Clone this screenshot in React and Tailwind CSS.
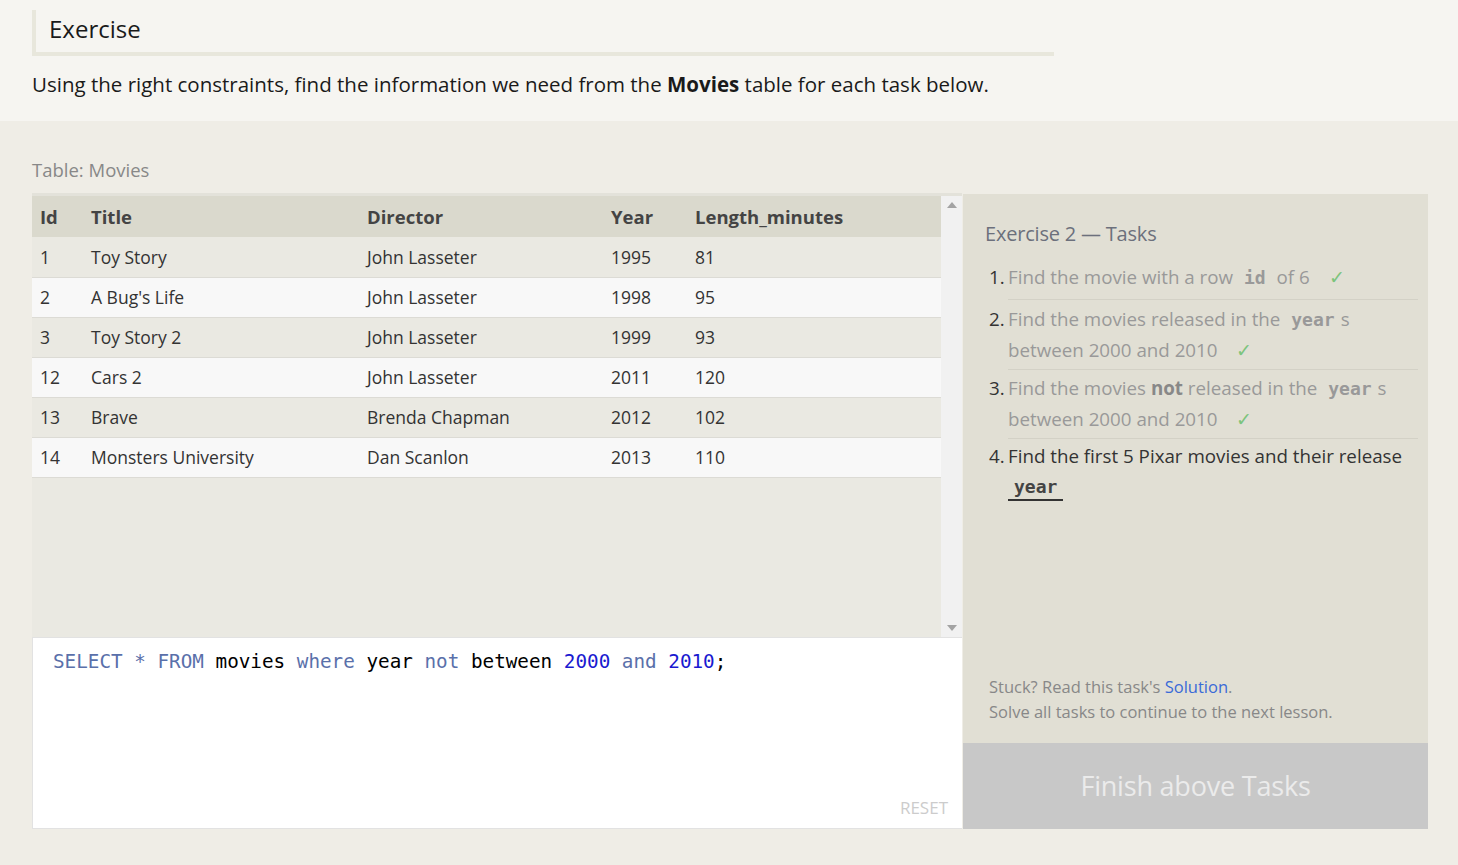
import React from "react";

const rows = [
  ["1", "Toy Story", "John Lasseter", "1995", "81"],
  ["2", "A Bug's Life", "John Lasseter", "1998", "95"],
  ["3", "Toy Story 2", "John Lasseter", "1999", "93"],
  ["12", "Cars 2", "John Lasseter", "2011", "120"],
  ["13", "Brave", "Brenda Chapman", "2012", "102"],
  ["14", "Monsters University", "Dan Scanlon", "2013", "110"],
];

function Check() {
  return <span className="ml-[14px] text-[#7cc47c]">✓</span>;
}

function Code({ children, dark }) {
  return (
    <code
      className={`px-[6px] font-['DejaVu_Sans_Mono',monospace] font-bold text-[18px] ${
        dark ? "text-[#444]" : "text-[#999]"
      }`}
    >
      {children}
    </code>
  );
}

export default function App() {
  return (
    <div className="min-h-[865px] bg-[#efede6] font-['Open_Sans',sans-serif] text-[#222]">
      {/* top section */}
      <div className="bg-[#f6f5f1] px-8 pt-[10px] h-[121px]">
        <div className="w-[1022px] h-[46px] border-l-4 border-b-4 border-[#e8e7dc] pl-[13px] flex items-center">
          <h2 className="text-[24px] leading-none text-[#1a1a1a] pb-[4px]">Exercise</h2>
        </div>
        <p className="mt-[14px] text-[20.5px] leading-[28px] text-[#1a1a1a]">
          Using the right constraints, find the information we need from the <b>Movies</b> table for each task below.
        </p>
      </div>

      {/* lower section */}
      <div className="px-8 pt-[37px]">
        <div className="text-[18.5px] leading-[24px] text-[#888]">Table: Movies</div>
        <div className="mt-[11px] flex w-[1396px] h-[636px]">
          {/* left column */}
          <div className="w-[930px] flex flex-col">
            <div className="h-[444px] flex border-t-[3px] border-[#e3e2da] bg-[#eae9e2]">
              <div className="flex-1">
                <table className="w-full border-collapse text-[17.5px]">
                  <thead>
                    <tr className="bg-[#dad9cd] h-[41px] text-[#444] text-[18.5px]">
                      <th className="w-[51px] text-left pl-[8px] font-bold">Id</th>
                      <th className="w-[276px] text-left pl-[8px] font-bold">Title</th>
                      <th className="w-[244px] text-left pl-[8px] font-bold">Director</th>
                      <th className="w-[84px] text-left pl-[8px] font-bold">Year</th>
                      <th className="text-left pl-[8px] font-bold">Length_minutes</th>
                    </tr>
                  </thead>
                  <tbody>
                    {rows.map((r, i) => (
                      <tr
                        key={i}
                        className={`h-[40px] border-b border-[#dcdbd5] text-[#333] ${
                          i % 2 === 0 ? "bg-[#eae9e2]" : "bg-[#f8f8f8]"
                        }`}
                      >
                        {r.map((c, j) => (
                          <td key={j} className="pl-[8px] pt-[1px] font-normal">
                            {c}
                          </td>
                        ))}
                      </tr>
                    ))}
                  </tbody>
                </table>
              </div>
              <div className="w-[21px] bg-[#f1f1f1] flex flex-col justify-between items-center py-[6px]">
                <svg width="10" height="6" viewBox="0 0 10 6">
                  <path d="M5 0 L10 6 L0 6 Z" fill="#a3a3a3" />
                </svg>
                <svg width="10" height="6" viewBox="0 0 10 6">
                  <path d="M0 0 L10 0 L5 6 Z" fill="#a3a3a3" />
                </svg>
              </div>
            </div>
            <div className="flex-1 bg-white border border-[#e2e2e2] border-r-0 pl-[20px] pt-[12px] pr-[14px] pb-[10px] flex flex-col">
              <div className="font-['DejaVu_Sans_Mono',monospace] text-[19.3px] leading-[24px] whitespace-pre text-black">
                <span className="text-[#5a70aa]">SELECT</span> <span className="text-[#5a70aa]">*</span>{" "}
                <span className="text-[#5a70aa]">FROM</span> movies <span className="text-[#5a70aa]">where</span> year{" "}
                <span className="text-[#5a70aa]">not</span> between <span className="text-[#1a1ad0]">2000</span>{" "}
                <span className="text-[#5a70aa]">and</span> <span className="text-[#1a1ad0]">2010</span>;
              </div>
              <div className="mt-auto self-end text-[17px] leading-[20px] text-[#ccc]">RESET</div>
            </div>
          </div>

          {/* right panel */}
          <div className="ml-px w-[465px] bg-[#e1dfd4] flex flex-col mt-px">
            <div className="flex-1 pl-[22px] pr-[10px] pt-[26px] flex flex-col">
              <h3 className="text-[20px] leading-[28px] text-[#6c707c] tracking-[-0.2px]">Exercise 2 — Tasks</h3>
              <ol className="mt-[14px] ml-[4px] text-[18.75px] leading-[30px]">
                <li className="flex">
                  <span className="w-[19px] text-[#333]">1.</span>
                  <div className="flex-1 border-b border-[#d3d1c6] pb-[6px] text-[#999]">
                    Find the movie with a row <Code>id</Code> of 6 <Check />
                  </div>
                </li>
                <li className="flex mt-[4px]">
                  <span className="w-[19px] text-[#333]">2.</span>
                  <div className="flex-1 border-b border-[#d3d1c6] pb-[4px] text-[#999]">
                    Find the movies released in the <Code>year</Code>s between 2000 and 2010 <Check />
                  </div>
                </li>
                <li className="flex mt-[3px]">
                  <span className="w-[19px] text-[#333]">3.</span>
                  <div className="flex-1 border-b border-[#d3d1c6] pb-[4px] text-[#999]">
                    Find the movies <b className="text-[#888]">not</b> released in the <Code>year</Code>s between 2000 and 2010{" "}
                    <Check />
                  </div>
                </li>
                <li className="flex mt-[2px]">
                  <span className="w-[19px] text-[#333]">4.</span>
                  <div className="flex-1 text-[#333]">
                    Find the first 5 Pixar movies and their release{" "}
                    <span className="inline-block border-b-2 border-[#333] leading-[24px]">
                      <Code dark>year</Code>
                    </span>
                  </div>
                </li>
              </ol>
              <div className="mt-auto pl-[4px] pb-[19px] text-[16.5px] leading-[25px] text-[#888]">
                <div>
                  Stuck? Read this task's <span className="text-[#3a6ad8]">Solution</span>.
                </div>
                <div>Solve all tasks to continue to the next lesson.</div>
              </div>
            </div>
            <div className="h-[86px] bg-[#c8c8c8] flex items-center justify-center text-[27px] text-[#ebebeb] tracking-[-0.2px]">
              Finish above Tasks
            </div>
          </div>
        </div>
      </div>
    </div>
  );
}
